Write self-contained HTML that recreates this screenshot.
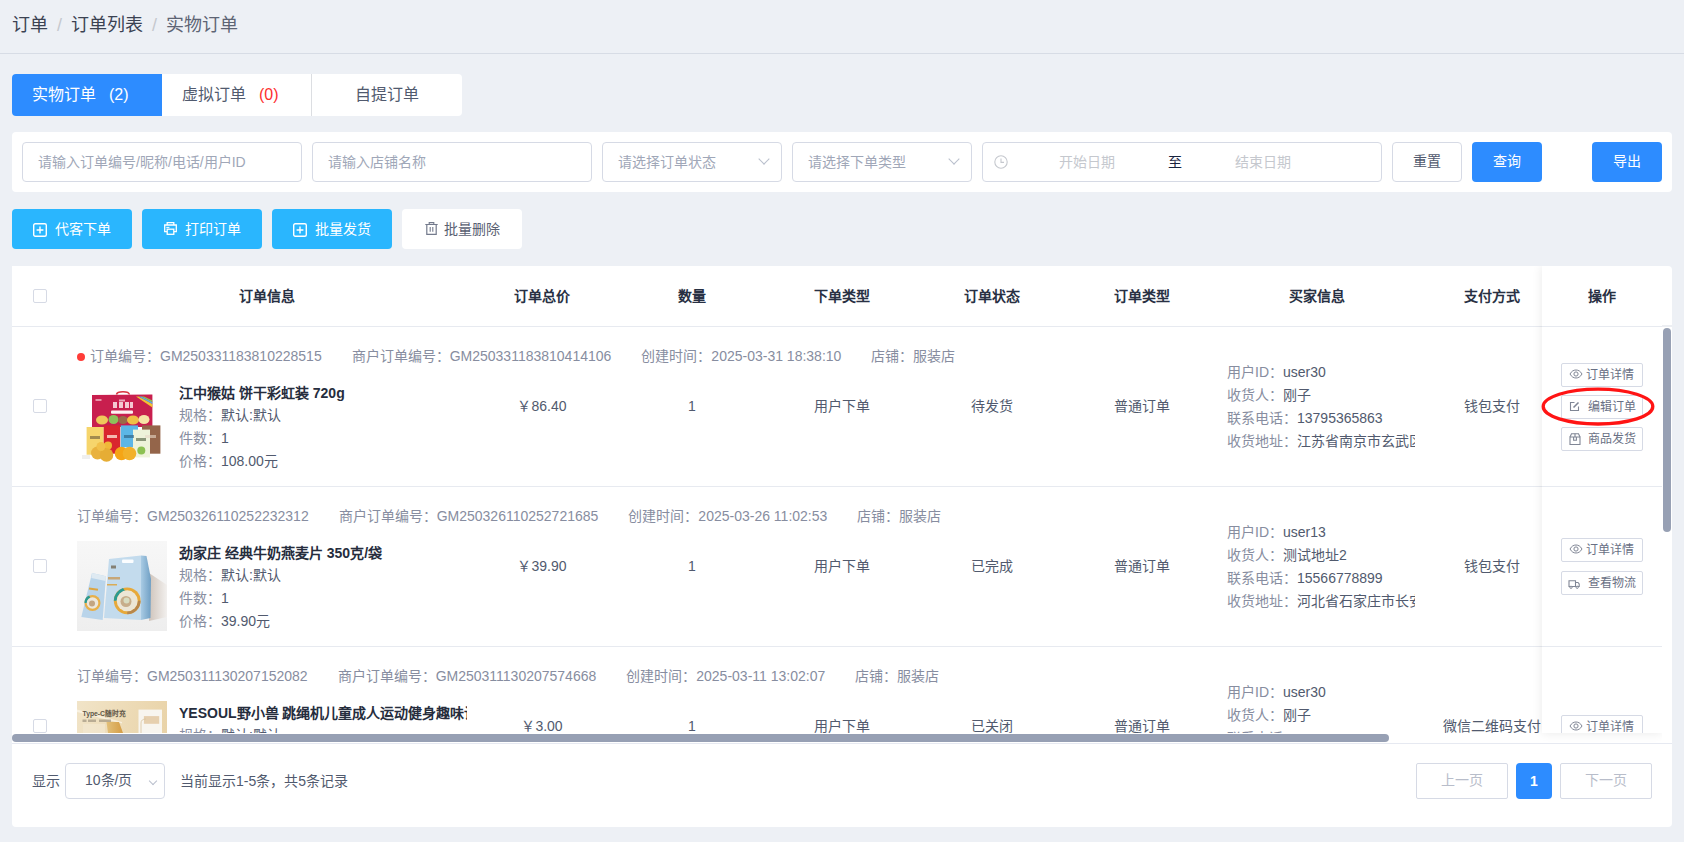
<!DOCTYPE html>
<html lang="zh-CN">
<head>
<meta charset="utf-8">
<style>
*{box-sizing:border-box;margin:0;padding:0}
html,body{width:1684px;height:842px;overflow:hidden;background:#edf0f5;font-family:"Liberation Sans",sans-serif;color:#515a6e;font-size:14px}
.a{position:absolute}
.crumb{left:12px;top:14px;font-size:18px;line-height:22px;color:#3b4252;white-space:nowrap}
.crumb .sep{color:#c5c8ce;margin:0 9px;display:inline-block}
.crumb .last{color:#5d6474}
.hline{left:0;top:53px;width:1684px;height:1px;background:#d7dce5}
.tabs{left:12px;top:74px;width:450px;height:42px;background:#fff;border-radius:4px;overflow:hidden}
.tab{position:absolute;top:0;height:42px;line-height:42px;font-size:16px;white-space:nowrap}
.card{background:#fff;border-radius:4px}
.inp{position:absolute;top:142px;height:40px;border:1px solid #d6dae5;border-radius:4px;background:#fff;font-size:14px;line-height:38px;color:#a0a7b8;padding-left:15px;white-space:nowrap}
.chev{position:absolute;right:13px;top:12px;width:8px;height:8px;border-right:1px solid #b9bfcc;border-bottom:1px solid #b9bfcc;transform:rotate(45deg)}
.btn{position:absolute;height:40px;border-radius:4px;text-align:center;line-height:39px;font-size:14px;white-space:nowrap}
.b-pri{background:#2d8cff;color:#fff;font-weight:500}
.b-info{background:#2ab6fe;color:#fff}

.th{background:#fff}
.cb{position:absolute;width:14px;height:14px;border:1px solid #d6dae5;border-radius:2px;background:#fff}
.thc{position:absolute;top:0;height:60px;line-height:60px;text-align:center;font-weight:bold;color:#283043;white-space:nowrap}
.row{position:absolute;left:0;width:1650px;height:160px;border-bottom:1px solid #e7eaf0;background:#fff}
.meta{position:absolute;white-space:nowrap;color:#878da0;line-height:16px}
.mi{margin-right:30px}
.dot{display:inline-block;width:8px;height:8px;border-radius:50%;background:#ff3c38;margin-right:5px;vertical-align:0px}
.pimg{position:absolute;width:90px;height:90px;overflow:hidden}
.pinfo{position:absolute;line-height:23px;white-space:nowrap;color:#515a6e;top:54px;width:288px;overflow:hidden}
.pt{font-weight:bold;color:#262d3d;position:relative;top:1px}
.lb{color:#878da0}
.td{position:absolute;top:0;height:159px;line-height:159px;text-align:center;white-space:nowrap;color:#515a6e}
.buyer{position:absolute;top:34px;line-height:23px;white-space:nowrap;width:188px;overflow:hidden;color:#515a6e}

.fixr{background:#fff;overflow:hidden;box-shadow:0 0 10px rgba(0,0,0,0.09);clip-path:inset(0 0 -14px -14px)}
.ob{position:absolute;left:19px;width:82px;height:24px;border:1px solid #d6dae5;border-radius:2px;font-size:12px;line-height:22px;color:#697084;padding-left:26px;white-space:nowrap;background:#fff}
.ic{position:absolute;left:7px;top:5px;width:12px;height:12px;font-style:normal;font-size:0}
.pgsel{border:1px solid #d6dae5;border-radius:4px;line-height:32px;padding-left:19px;color:#515a6e;background:#fff}
.pgb{position:absolute;height:36px;border:1px solid #d6dae5;border-radius:2px;text-align:center;line-height:33px;color:#b8bdca;background:#fff}

.btxt{top:209px;line-height:40px;color:#fff;font-size:14px;white-space:nowrap;font-weight:500}
</style>
</head>
<body>
<div class="a crumb">订单<span class="sep">/</span>订单列表<span class="sep">/</span><span class="last">实物订单</span></div>
<div class="a hline"></div>

<div class="a tabs">
  <div class="tab" style="left:0;width:150px;background:#2d8cff;color:#fff"><span class="a" style="left:20px">实物订单<span style="margin-left:13px">(2)</span></span></div>
  <div class="tab" style="left:150px;width:150px;color:#515a6e"><span class="a" style="left:20px">虚拟订单<span style="color:#fd2f2f;margin-left:13px">(0)</span></span></div>
  <div class="a" style="left:299px;top:0;width:1px;height:42px;background:#dcdee2"></div>
  <div class="tab" style="left:300px;width:150px;color:#515a6e;text-align:center">自提订单</div>
</div>

<div class="a card" style="left:12px;top:132px;width:1660px;height:60px"></div>
<div class="inp" style="left:22px;width:280px">请输入订单编号/昵称/电话/用户ID</div>
<div class="inp" style="left:312px;width:280px">请输入店铺名称</div>
<div class="inp" style="left:602px;width:180px">请选择订单状态<i class="chev"></i></div>
<div class="inp" style="left:792px;width:180px">请选择下单类型<i class="chev"></i></div>
<div class="inp" style="left:982px;width:400px"></div>
<svg class="a" style="left:994px;top:155px" width="14" height="14" viewBox="0 0 14 14"><circle cx="7" cy="7" r="6.2" fill="none" stroke="#c5c8ce" stroke-width="1.1"/><path d="M7 3.4V7.4H10" fill="none" stroke="#c5c8ce" stroke-width="1.1"/></svg>
<span class="a" style="left:1059px;top:142px;line-height:40px;color:#c5c8ce;white-space:nowrap">开始日期</span>
<span class="a" style="left:1168px;top:142px;line-height:40px;color:#17233d;white-space:nowrap">至</span>
<span class="a" style="left:1235px;top:142px;line-height:40px;color:#c5c8ce;white-space:nowrap">结束日期</span>
<div class="btn" style="left:1392px;top:142px;width:70px;border:1px solid #d6dae5;background:#fff;color:#515a6e;line-height:37px">重置</div>
<div class="btn b-pri" style="left:1472px;top:142px;width:70px">查询</div>
<div class="btn b-pri" style="left:1592px;top:142px;width:70px">导出</div>

<div class="btn b-info" style="left:12px;top:209px;width:120px"></div><span class="a btxt" style="left:55px">代客下单</span>
<div class="btn b-info" style="left:142px;top:209px;width:120px"></div><span class="a btxt" style="left:185px">打印订单</span>
<div class="btn b-info" style="left:272px;top:209px;width:120px"></div><span class="a btxt" style="left:315px">批量发货</span>
<div class="btn" style="left:402px;top:209px;width:120px;background:#fff"></div><span class="a btxt" style="left:444px;color:#596072;font-weight:normal">批量删除</span>
<svg class="a" style="left:33px;top:223px" width="14" height="14" viewBox="0 0 14 14"><rect x="0.7" y="0.7" width="12.6" height="12.6" rx="1.5" fill="none" stroke="#fff" stroke-width="1.4"/><path d="M7 3.6V10.4M3.6 7H10.4" stroke="#fff" stroke-width="1.4"/></svg><svg class="a" style="left:164px;top:222px" width="13" height="13" viewBox="0 0 13 13"><path d="M3.2 3V0.7H9.8V3" fill="none" stroke="#fff" stroke-width="1.3"/><path d="M3 9.6H0.7V3H12.3V9.6H10" fill="none" stroke="#fff" stroke-width="1.3"/><rect x="3.2" y="7.2" width="6.6" height="5.1" fill="none" stroke="#fff" stroke-width="1.3"/><path d="M2.3 5.4H5.4" stroke="#fff" stroke-width="1"/></svg><svg class="a" style="left:293px;top:223px" width="14" height="14" viewBox="0 0 14 14"><rect x="0.7" y="0.7" width="12.6" height="12.6" rx="1.5" fill="none" stroke="#fff" stroke-width="1.4"/><path d="M7 3.6V10.4M3.6 7H10.4" stroke="#fff" stroke-width="1.4"/></svg><svg class="a" style="left:425px;top:222px" width="13" height="13" viewBox="0 0 13 13"><path d="M0.3 2.5H12.7M4.2 2.3V0.6H8.8V2.3" fill="none" stroke="#737a8c" stroke-width="1.1"/><path d="M1.8 2.5V12.4H11.2V2.5" fill="none" stroke="#737a8c" stroke-width="1.2"/><path d="M5.2 5V9.8M7.8 5V9.8" stroke="#737a8c" stroke-width="1.1"/></svg>


<div class="a card" style="left:12px;top:266px;width:1660px;height:561px"></div>
<!-- header -->
<div class="a th" style="left:12px;top:266px;width:1650px;height:60px">
  <i class="cb" style="left:21px;top:23px"></i>
  <span class="thc" style="left:55px;width:400px">订单信息</span>
  <span class="thc" style="left:455px;width:150px">订单总价</span>
  <span class="thc" style="left:605px;width:150px">数量</span>
  <span class="thc" style="left:755px;width:150px">下单类型</span>
  <span class="thc" style="left:905px;width:150px">订单状态</span>
  <span class="thc" style="left:1055px;width:150px">订单类型</span>
  <span class="thc" style="left:1205px;width:200px">买家信息</span>
  <span class="thc" style="left:1405px;width:150px">支付方式</span>
</div>
<div class="a" style="left:12px;top:326px;width:1660px;height:1px;background:#e7eaf0"></div>
<!-- body viewport -->
<div class="a body" style="left:12px;top:327px;width:1650px;height:406px;overflow:hidden">

  <div class="row" style="top:0px">
    <i class="cb" style="left:21px;top:72px"></i>
    <div class="meta" style="left:65px;top:21px"><i class="dot"></i><span class="mi">订单编号：GM250331183810228515</span><span class="mi">商户订单编号：GM250331183810414106</span><span class="mi">创建时间：2025-03-31 18:38:10</span><span class="mi">店铺：服装店</span></div>
    <div class="pimg" style="left:65px;top:54px"><svg width="90" height="90" viewBox="0 0 90 90"><rect width="90" height="90" fill="#fff"/>
<path d="M39.5 13.5 Q40 10.8 46 10.8 Q52 10.8 52.4 13.5" fill="none" stroke="#d8323e" stroke-width="1.5"/>
<path d="M15 14 L75.4 13.4 L75.4 46 L15 46Z" fill="#c81f4e"/>
<path d="M61.5 15.5 L75.4 23 L75.4 26.5 L59 15.5Z" fill="#f2c230"/><path d="M64.5 15.5 L75.4 21 L75.4 23 L61.5 15.5Z" fill="#5ab0e0"/><path d="M67 15.5 L75.4 19.5 L75.4 21 L64.5 15.5Z" fill="#8cc84a"/>
<rect x="18.5" y="18" width="6" height="2" fill="#f0b0c0" opacity="0.8"/>
<path d="M36 21 h4 v6 h-4z M42 21 h4 v6 h-4z M48 21 h4 v6 h-4z M53 21 h3 v6 h-3z" fill="#fbe6ea" opacity="0.85"/>
<rect x="42" y="18.5" width="6" height="2" fill="#fbe6ea" opacity="0.7"/>
<rect x="34" y="29.5" width="22" height="3.2" rx="1" fill="#fdf2f2"/>
<ellipse cx="25" cy="39" rx="6" ry="4.5" fill="#efc85a"/><ellipse cx="36.5" cy="38.5" rx="5" ry="4.5" fill="#8ec05a"/><ellipse cx="46" cy="39" rx="5" ry="4" fill="#9a6a48"/><ellipse cx="56" cy="39" rx="6" ry="4.5" fill="#f0bf45"/><ellipse cx="67" cy="38.5" rx="5.5" ry="4.5" fill="#f6e3a6"/>
<rect x="9.6" y="46" width="17.1" height="27.7" fill="#f6d56c"/>
<rect x="26.7" y="44.4" width="16.6" height="28.3" fill="#d9262e"/>
<rect x="43.8" y="44.4" width="17.2" height="21.9" fill="#5cb6e6"/>
<rect x="65" y="44.4" width="18.4" height="28.3" fill="#94654a"/>
<rect x="56" y="48.6" width="17" height="27.8" fill="#eef3da"/>
<rect x="13" y="55" width="10" height="3" fill="#6b5a3a" opacity="0.6"/><rect x="30" y="54" width="10" height="3" fill="#fbe0d0" opacity="0.8"/><rect x="47" y="54" width="10" height="3" fill="#2a5a7a" opacity="0.6"/><rect x="59" y="57" width="10" height="3" fill="#4a5a3a" opacity="0.6"/><rect x="68" y="54" width="11" height="3" fill="#e8d8c8" opacity="0.6"/>
<circle cx="64.3" cy="69.5" r="4" fill="#8cc152"/>
<circle cx="31" cy="64.5" r="4" fill="#f0b838"/>
<circle cx="20.5" cy="72" r="6.5" fill="#e9b23e"/><circle cx="29.5" cy="74" r="6.8" fill="#e6ad35"/><circle cx="24" cy="65.5" r="4.5" fill="#f1c04a"/>
<circle cx="44.5" cy="72.5" r="6.8" fill="#f5a516"/><circle cx="52.5" cy="72.5" r="6.8" fill="#f2b12a"/>
<rect x="5" y="74" width="8" height="4" fill="#e8e8e8" opacity="0.7"/>
</svg></div>
    <div class="pinfo" style="left:167px;top:54px">
      <div class="pt">江中猴姑 饼干彩虹装 720g</div>
      <div><span class="lb">规格：</span>默认:默认</div>
      <div><span class="lb">件数：</span>1</div>
      <div><span class="lb">价格：</span>108.00元</div>
    </div>
    <span class="td" style="left:455px;width:150px">￥86.40</span>
    <span class="td" style="left:605px;width:150px">1</span>
    <span class="td" style="left:755px;width:150px">用户下单</span>
    <span class="td" style="left:905px;width:150px">待发货</span>
    <span class="td" style="left:1055px;width:150px">普通订单</span>
    <div class="buyer" style="left:1215px">
      <div><span class="lb">用户ID：</span>user30</div>
      <div><span class="lb">收货人：</span>刚子</div>
      <div><span class="lb">联系电话：</span>13795365863</div>
      <div><span class="lb">收货地址：</span>江苏省南京市玄武区</div>
    </div>
    <span class="td" style="left:1405px;width:150px">钱包支付</span>
  </div>
  <div class="row" style="top:160px">
    <i class="cb" style="left:21px;top:72px"></i>
    <div class="meta" style="left:65px;top:21px"><span class="mi">订单编号：GM250326110252232312</span><span class="mi">商户订单编号：GM250326110252721685</span><span class="mi">创建时间：2025-03-26 11:02:53</span><span class="mi">店铺：服装店</span></div>
    <div class="pimg" style="left:65px;top:54px"><svg width="90" height="90" viewBox="0 0 90 90"><defs><linearGradient id="g2bg" x1="0" y1="0" x2="0" y2="1"><stop offset="0" stop-color="#f7f7f7"/><stop offset="1" stop-color="#eeeeee"/></linearGradient><linearGradient id="g2sh" x1="0" y1="0" x2="1" y2="0"><stop offset="0" stop-color="#cfc4bb"/><stop offset="1" stop-color="#f2f0ee"/></linearGradient><linearGradient id="g2side" x1="0" y1="0" x2="1" y2="0"><stop offset="0" stop-color="#a9cbe4"/><stop offset="1" stop-color="#6f9fc4"/></linearGradient></defs>
<rect width="90" height="90" fill="url(#g2bg)"/>
<path d="M72 32 L90 44 L90 76 L72 80Z" fill="url(#g2sh)"/>
<path d="M32 18 L64 14.5 L64 79 L27 77Z" fill="#c3dbed"/>
<path d="M64 14.5 L69.5 15 L74 38 L73.5 77 L64 79Z" fill="url(#g2side)"/>
<rect x="45" y="18.5" width="11.5" height="3.5" rx="1" fill="#fbfdff"/>
<rect x="34" y="24.5" width="5" height="3" fill="#6a5a40" opacity="0.7"/>
<rect x="31" y="36" width="12" height="2.5" fill="#c89a5a" opacity="0.8"/>
<rect x="30" y="43" width="10" height="1.5" fill="#e0a030" opacity="0.8"/>
<circle cx="50.2" cy="59.8" r="13.4" fill="#e7a93a"/>
<path d="M36.8 59.8 A13.4 13.4 0 0 1 46 47 L48 50 A10.5 10.5 0 0 0 39.7 59.8Z" fill="#2b9a90"/>
<path d="M50.2 73.2 A13.4 13.4 0 0 0 63.6 59.8 L60.7 59.8 A10.5 10.5 0 0 1 50.2 70.3Z" fill="#b8874c"/>
<circle cx="50.2" cy="59.8" r="10.5" fill="#ece6d6"/>
<circle cx="49" cy="60.5" r="5.5" fill="#c7ad8a"/><circle cx="49.5" cy="59.5" r="3" fill="#d8dcc0"/>
<path d="M15 32 L29 35.3 L25.7 79 L4.3 75.9Z" fill="#b9d4ea"/>
<path d="M15 32 L29 35.3 L28.6 40 L14.4 37Z" fill="#dfeaf2"/>
<rect x="12" y="47" width="9" height="2" fill="#e0a030" opacity="0.9" transform="rotate(8 16 48)"/>
<circle cx="15.5" cy="62" r="8" fill="#e8b04a"/><path d="M7.5 62 A8 8 0 0 1 12 54.5 L13.5 57 A5.5 5.5 0 0 0 10 62Z" fill="#2b9a90"/><circle cx="15.5" cy="62" r="5.8" fill="#ede7dc"/><circle cx="15" cy="62.5" r="3" fill="#c3a582"/>
</svg></div>
    <div class="pinfo" style="left:167px;top:54px">
      <div class="pt">劲家庄 经典牛奶燕麦片 350克/袋</div>
      <div><span class="lb">规格：</span>默认:默认</div>
      <div><span class="lb">件数：</span>1</div>
      <div><span class="lb">价格：</span>39.90元</div>
    </div>
    <span class="td" style="left:455px;width:150px">￥39.90</span>
    <span class="td" style="left:605px;width:150px">1</span>
    <span class="td" style="left:755px;width:150px">用户下单</span>
    <span class="td" style="left:905px;width:150px">已完成</span>
    <span class="td" style="left:1055px;width:150px">普通订单</span>
    <div class="buyer" style="left:1215px">
      <div><span class="lb">用户ID：</span>user13</div>
      <div><span class="lb">收货人：</span>测试地址2</div>
      <div><span class="lb">联系电话：</span>15566778899</div>
      <div><span class="lb">收货地址：</span>河北省石家庄市长安区</div>
    </div>
    <span class="td" style="left:1405px;width:150px">钱包支付</span>
  </div>
  <div class="row" style="top:320px">
    <i class="cb" style="left:21px;top:72px"></i>
    <div class="meta" style="left:65px;top:21px"><span class="mi">订单编号：GM250311130207152082</span><span class="mi">商户订单编号：GM250311130207574668</span><span class="mi">创建时间：2025-03-11 13:02:07</span><span class="mi">店铺：服装店</span></div>
    <div class="pimg" style="left:65px;top:54px"><svg width="90" height="90" viewBox="0 0 90 90"><defs><linearGradient id="g3" x1="0" y1="0" x2="1" y2="0.3"><stop offset="0" stop-color="#f1e4c8"/><stop offset="1" stop-color="#e9d3a8"/></linearGradient><linearGradient id="g3b" x1="0" y1="0" x2="1" y2="0"><stop offset="0" stop-color="#e2c07a"/><stop offset="1" stop-color="#d59d45"/></linearGradient></defs>
<rect width="90" height="90" fill="url(#g3)"/>
<path d="M0 8.5 L45 21 L45 22.5 L0 11Z" fill="#faf4e6" opacity="0.8"/>
<text x="5.5" y="15" font-family="Liberation Sans" font-weight="bold" font-size="6.8" fill="#5e5547">Type-C随时充</text>
<rect x="5.5" y="18.5" width="4" height="2.5" fill="#8d8170" opacity="0.55"/><rect x="11" y="18.5" width="8" height="2.5" fill="#8d8170" opacity="0.55"/><rect x="22" y="18.5" width="12" height="2.5" fill="#8d8170" opacity="0.55"/>
<rect x="6" y="23" width="22" height="9" fill="#f3e9d4" opacity="0.6"/>
<path d="M29.5 21 L42 21 L46 32 L31 32Z" fill="url(#g3b)"/>
<rect x="61.5" y="8.6" width="23.5" height="24" fill="#f8f5ef"/>
<rect x="66.9" y="15.1" width="15.3" height="7.7" fill="#e6cfae"/>
<path d="M64 32 L64 22 Q64 18 69 18" fill="none" stroke="#d8c3a0" stroke-width="0.8"/>
</svg></div>
    <div class="pinfo" style="left:167px;top:54px">
      <div class="pt">YESOUL野小兽 跳绳机儿童成人运动健身趣味计数</div>
      <div><span class="lb">规格：</span>默认:默认</div>
      <div><span class="lb">件数：</span>1</div>
      <div><span class="lb">价格：</span>3.00元</div>
    </div>
    <span class="td" style="left:455px;width:150px">￥3.00</span>
    <span class="td" style="left:605px;width:150px">1</span>
    <span class="td" style="left:755px;width:150px">用户下单</span>
    <span class="td" style="left:905px;width:150px">已关闭</span>
    <span class="td" style="left:1055px;width:150px">普通订单</span>
    <div class="buyer" style="left:1215px">
      <div><span class="lb">用户ID：</span>user30</div>
      <div><span class="lb">收货人：</span>刚子</div>
      <div><span class="lb">联系电话：</span>13795365863</div>
      <div><span class="lb">收货地址：</span>江苏省南京市玄武区</div>
    </div>
    <span class="td" style="left:1405px;width:150px">微信二维码支付</span>
  </div>
</div>


<!-- fixed right column -->
<div class="a fixr" style="left:1542px;top:266px;width:120px;height:467px">
  <span class="thc" style="left:0;width:120px">操作</span>
  <div class="a" style="left:0;top:60px;width:120px;height:1px;background:#e7eaf0"></div>
  <div class="a" style="left:0;top:220px;width:120px;height:1px;background:#e7eaf0"></div>
  <div class="a" style="left:0;top:380px;width:120px;height:1px;background:#e7eaf0"></div>
  <div class="ob" style="top:97px;padding-left:24px"><svg class="ic" width="14" height="10" viewBox="0 0 14 10" style="left:7px;top:5px;width:14px;height:10px"><path d="M1 5C2.6 2.2 4.6 1 7 1S11.4 2.2 13 5C11.4 7.8 9.4 9 7 9S2.6 7.8 1 5Z" fill="none" stroke="#808695" stroke-width="1"/><circle cx="7" cy="5" r="2.1" fill="none" stroke="#808695" stroke-width="1"/></svg>订单详情</div>
  <div class="ob" style="top:129px"><svg class="ic" width="11" height="11" viewBox="0 0 11 11" style="left:7px;top:5px;width:11px;height:11px"><path d="M9.5 5.5V9.5H1.5V1.5H5.5" fill="none" stroke="#808695" stroke-width="1.1"/><path d="M4.5 6.5L9.5 1.5" stroke="#808695" stroke-width="1.6"/></svg>编辑订单</div>
  <div class="ob" style="top:161px"><svg class="ic" width="12" height="12" viewBox="0 0 12 12" style="left:6.5px;top:5px;width:12px;height:12px"><path d="M1 4H11V11.5H1Z" fill="none" stroke="#808695" stroke-width="1.1"/><path d="M1 4L2.5 0.8H9.5L11 4" fill="none" stroke="#808695" stroke-width="1.1"/><path d="M4.6 4V7.2H7.4V4M6 0.8V4" fill="none" stroke="#808695" stroke-width="1.1"/></svg>商品发货</div>
  <div class="ob" style="top:272px;padding-left:24px"><svg class="ic" width="14" height="10" viewBox="0 0 14 10" style="left:7px;top:5px;width:14px;height:10px"><path d="M1 5C2.6 2.2 4.6 1 7 1S11.4 2.2 13 5C11.4 7.8 9.4 9 7 9S2.6 7.8 1 5Z" fill="none" stroke="#808695" stroke-width="1"/><circle cx="7" cy="5" r="2.1" fill="none" stroke="#808695" stroke-width="1"/></svg>订单详情</div>
  <div class="ob" style="top:305px"><svg class="ic" width="12" height="9" viewBox="0 0 12 9" style="left:6px;top:8px;width:12px;height:9px"><path d="M1 0.8H7.5V6.5H1Z" fill="none" stroke="#808695" stroke-width="1.1"/><path d="M7.5 2.5H10L11.2 4V6.5H7.5" fill="none" stroke="#808695" stroke-width="1.1"/><circle cx="3" cy="7.3" r="1.1" fill="#fff" stroke="#808695" stroke-width="1"/><circle cx="9.2" cy="7.3" r="1.1" fill="#fff" stroke="#808695" stroke-width="1"/></svg>查看物流</div>
  <div class="ob" style="top:449px;padding-left:24px"><svg class="ic" width="14" height="10" viewBox="0 0 14 10" style="left:7px;top:5px;width:14px;height:10px"><path d="M1 5C2.6 2.2 4.6 1 7 1S11.4 2.2 13 5C11.4 7.8 9.4 9 7 9S2.6 7.8 1 5Z" fill="none" stroke="#808695" stroke-width="1"/><circle cx="7" cy="5" r="2.1" fill="none" stroke="#808695" stroke-width="1"/></svg>订单详情</div>
</div>

<!-- scrollbars -->
<div class="a" style="left:1662px;top:327px;width:10px;height:406px;background:#fff"></div><div class="a" style="left:1662px;top:325px;width:10px;height:2px;background:#eceef2"></div>
<div class="a" style="left:1663px;top:328px;width:8px;height:204px;border-radius:4px;background:#97a0b4"></div>
<div class="a" style="left:12px;top:734px;width:1377px;height:8px;border-radius:4px;background:#97a0b4"></div>
<div class="a" style="left:12px;top:743px;width:1660px;height:1px;background:#e6e9f1"></div>
<!-- red ellipse -->
<svg class="a" style="left:1536px;top:384px" width="124" height="46" viewBox="0 0 124 46"><ellipse cx="62" cy="22.6" rx="54.8" ry="17.4" fill="none" stroke="#ff1414" stroke-width="3.3"/></svg>
<!-- pagination -->
<div class="a" style="left:32px;top:763px;line-height:36px;color:#515a6e">显示</div>
<div class="a pgsel" style="left:65px;top:763px;width:100px;height:36px">10条/页<i class="chev" style="right:8px;top:14px;width:6px;height:6px"></i></div>
<div class="a" style="left:180px;top:763px;line-height:36px;color:#515a6e">当前显示1-5条，共5条记录</div>
<div class="a pgb" style="left:1416px;top:763px;width:92px">上一页</div>
<div class="a" style="left:1516px;top:763px;width:36px;height:36px;border-radius:4px;background:#2d8cff;color:#fff;font-weight:bold;text-align:center;line-height:36px">1</div>
<div class="a pgb" style="left:1560px;top:763px;width:92px">下一页</div>

</body>
</html>
